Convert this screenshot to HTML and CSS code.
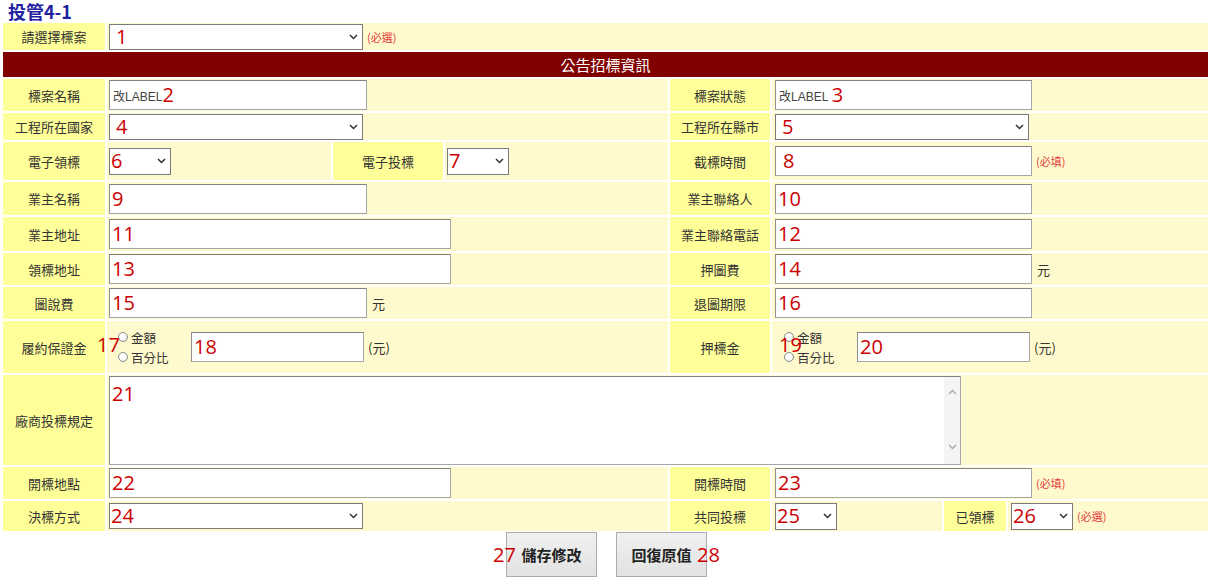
FILE: index.html
```html
<!DOCTYPE html>
<html lang="zh-Hant">
<head>
<meta charset="utf-8">
<title>投管4-1</title>
<link rel="stylesheet" href="styles.css">
</head>
<body>
<h1 class="title">投管4-1</h1>
<div class="form">
  <!-- row 1 -->
  <div class="lab">請選擇標案</div>
  <div class="val full">
    <div class="sel"><span class="num in6">1</span><svg class="chev" viewBox="0 0 9 6" width="9" height="6"><path d="M1 1l3.5 3.5L8 1" fill="none" stroke="#333" stroke-width="1.5"/></svg></div>
    <span class="req">(必選)</span>
  </div>

  <div class="head">公告招標資訊</div>

  <!-- row 3 -->
  <div class="lab">標案名稱</div>
  <div class="val left">
    <div class="inp"><span class="ph">改LABEL</span><span class="num">2</span></div>
  </div>
  <div class="lab">標案狀態</div>
  <div class="val r">
    <div class="inp r-w"><span class="ph">改LABEL&nbsp;</span><span class="num">3</span></div>
  </div>

  <!-- row 4 -->
  <div class="lab">工程所在國家</div>
  <div class="val left">
    <div class="sel"><span class="num in6">4</span><svg class="chev" viewBox="0 0 9 6" width="9" height="6"><path d="M1 1l3.5 3.5L8 1" fill="none" stroke="#333" stroke-width="1.5"/></svg></div>
  </div>
  <div class="lab">工程所在縣市</div>
  <div class="val r">
    <div class="sel"><span class="num in6">5</span><svg class="chev" viewBox="0 0 9 6" width="9" height="6"><path d="M1 1l3.5 3.5L8 1" fill="none" stroke="#333" stroke-width="1.5"/></svg></div>
  </div>

  <!-- row 5 -->
  <div class="lab">電子領標</div>
  <div class="val">
    <div class="sel mini"><span class="num">6</span><svg class="chev" viewBox="0 0 9 6" width="9" height="6"><path d="M1 1l3.5 3.5L8 1" fill="none" stroke="#333" stroke-width="1.5"/></svg></div>
  </div>
  <div class="lab">電子投標</div>
  <div class="val">
    <div class="sel mini"><span class="num">7</span><svg class="chev" viewBox="0 0 9 6" width="9" height="6"><path d="M1 1l3.5 3.5L8 1" fill="none" stroke="#333" stroke-width="1.5"/></svg></div>
  </div>
  <div class="lab">截標時間</div>
  <div class="val r">
    <div class="inp r-w"><span class="num in6">8</span></div>
    <span class="req">(必填)</span>
  </div>

  <!-- row 6 -->
  <div class="lab">業主名稱</div>
  <div class="val left">
    <div class="inp"><span class="num">9</span></div>
  </div>
  <div class="lab">業主聯絡人</div>
  <div class="val r">
    <div class="inp r-w"><span class="num">10</span></div>
  </div>

  <!-- row 7 -->
  <div class="lab">業主地址</div>
  <div class="val left">
    <div class="inp long"><span class="num">11</span></div>
  </div>
  <div class="lab">業主聯絡電話</div>
  <div class="val r">
    <div class="inp r-w"><span class="num">12</span></div>
  </div>

  <!-- row 8 -->
  <div class="lab">領標地址</div>
  <div class="val left">
    <div class="inp long"><span class="num">13</span></div>
  </div>
  <div class="lab">押圖費</div>
  <div class="val r">
    <div class="inp r-w"><span class="num">14</span></div>
    <span class="unit">元</span>
  </div>

  <!-- row 9 -->
  <div class="lab">圖說費</div>
  <div class="val left">
    <div class="inp"><span class="num">15</span></div>
    <span class="unit">元</span>
  </div>
  <div class="lab">退圖期限</div>
  <div class="val r">
    <div class="inp r-w"><span class="num">16</span></div>
  </div>

  <!-- row 10 -->
  <div class="lab">履約保證金</div>
  <div class="val left">
    <div class="radios">
      <span class="num ov ov17">17</span>
      <label class="radio"><span class="dot"></span>金額</label>
      <label class="radio"><span class="dot"></span>百分比</label>
    </div>
    <div class="inp short"><span class="num">18</span></div>
    <span class="unit paren">(元)</span>
  </div>
  <div class="lab">押標金</div>
  <div class="val r">
    <div class="radios">
      <label class="radio"><span class="dot"></span>金額</label>
      <label class="radio"><span class="dot"></span>百分比</label>
      <span class="num ov ov19">19</span>
    </div>
    <div class="inp short"><span class="num">20</span></div>
    <span class="unit paren">(元)</span>
  </div>

  <!-- row 11 -->
  <div class="lab">廠商投標規定</div>
  <div class="val full top">
    <div class="ta">
      <div class="ta-text"><span class="num">21</span></div>
      <div class="ta-bar">
        <svg viewBox="0 0 9 6" width="9" height="6"><path d="M1 5l3.5-3.5L8 5" fill="none" stroke="#a8a8a8" stroke-width="1.3"/></svg>
        <svg viewBox="0 0 9 6" width="9" height="6"><path d="M1 1l3.5 3.5L8 1" fill="none" stroke="#a8a8a8" stroke-width="1.3"/></svg>
      </div>
    </div>
  </div>

  <!-- row 12 -->
  <div class="lab">開標地點</div>
  <div class="val left">
    <div class="inp long"><span class="num">22</span></div>
  </div>
  <div class="lab">開標時間</div>
  <div class="val r">
    <div class="inp r-w"><span class="num">23</span></div>
    <span class="req">(必填)</span>
  </div>

  <!-- row 13 -->
  <div class="lab">決標方式</div>
  <div class="val left">
    <div class="sel"><span class="num">24</span><svg class="chev" viewBox="0 0 9 6" width="9" height="6"><path d="M1 1l3.5 3.5L8 1" fill="none" stroke="#333" stroke-width="1.5"/></svg></div>
  </div>
  <div class="lab">共同投標</div>
  <div class="split">
    <div class="val r">
      <div class="sel mini"><span class="num">25</span><svg class="chev" viewBox="0 0 9 6" width="9" height="6"><path d="M1 1l3.5 3.5L8 1" fill="none" stroke="#333" stroke-width="1.5"/></svg></div>
    </div>
    <div class="lab">已領標</div>
    <div class="val r">
      <div class="sel mini"><span class="num">26</span><svg class="chev" viewBox="0 0 9 6" width="9" height="6"><path d="M1 1l3.5 3.5L8 1" fill="none" stroke="#333" stroke-width="1.5"/></svg></div>
      <span class="req">(必選)</span>
    </div>
  </div>
</div>

<div class="actions">
  <button class="btn" type="button"><span class="num ov ov27">27</span>儲存修改</button>
  <button class="btn" type="button">回復原值<span class="num ov ov28">28</span></button>
</div>
</body>
</html>
```

FILE: styles.css
```css
* { box-sizing: border-box; }

body {
  margin: 0;
  background: #fff;
  font-family: "Noto Sans CJK TC", "Noto Sans", sans-serif;
  color: #333;
}

.title {
  margin: 0;
  padding-left: 8px;
  height: 23px;
  font-size: 18px;
  line-height: 23px;
  font-weight: bold;
  color: #1f1f9f;
}

.form {
  display: grid;
  width: 1205px;
  margin-left: 3px;
  grid-template-columns: 102px 224px 110px 223px 100px 436px;
  grid-template-rows: 27px 25px 32px 27px 38px 33px 34px 32px 32px 52px 90px 32px 30px;
  gap: 2px;
}

.lab {
  background: #ffff99;
  display: flex;
  align-items: center;
  justify-content: center;
  font-size: 13px;
  color: #333;
  white-space: nowrap;
}

.val {
  background: #fffacd;
  display: flex;
  align-items: center;
  padding-left: 2px;
  min-width: 0;
}

.val.r { padding-left: 3px; }
.val.left { grid-column: 2 / 5; }
.val.full { grid-column: 2 / -1; }
.val.top { align-items: flex-start; }

.head {
  grid-column: 1 / -1;
  background: #800000;
  color: #fff;
  font-size: 15px;
  display: flex;
  align-items: center;
  justify-content: center;
}

.split {
  display: grid;
  grid-template-columns: 170px 62px 200px;
  gap: 2px;
}

.num {
  font-family: "Open Sans", "Noto Sans", sans-serif;
  font-size: 20px;
  line-height: 1;
  color: #cc0000;
  white-space: nowrap;
}

.num.in6 { padding-left: 5px; }

.ph {
  font-family: "Liberation Sans", "Noto Sans CJK TC", sans-serif;
  font-size: 12px;
  color: #444;
  padding-left: 1px;
}

.inp {
  width: 258px;
  height: 30px;
  background: #fff;
  border: 1px solid #a6a6a6;
  border-top-color: #828282;
  border-left-color: #909090;
  display: flex;
  align-items: center;
  padding-left: 2px;
  flex-shrink: 0;
}

.inp.r-w { width: 257px; }
.inp.long { width: 342px; }
.inp.short { width: 173px; }

.sel {
  width: 254px;
  height: 26px;
  background: #fff;
  border: 1px solid #7a7a7a;
  display: flex;
  align-items: center;
  padding: 0 4px 0 1px;
  flex-shrink: 0;
}

.sel.mini { width: 62px; height: 27px; }

.chev { margin-left: auto; flex-shrink: 0; }

.req {
  font-size: 11px;
  color: #e23b3b;
  margin-left: 4px;
  white-space: nowrap;
}

.unit {
  font-size: 13px;
  color: #333;
  margin-left: 5px;
}

.unit.paren { margin-left: 4px; }

.radios {
  position: relative;
  width: 73px;
  margin-left: 9px;
  display: flex;
  flex-direction: column;
  flex-shrink: 0;
}

.radio {
  display: flex;
  align-items: center;
  height: 20px;
  font-size: 12.5px;
  color: #333;
}

.dot {
  width: 10px;
  height: 10px;
  border-radius: 50%;
  border: 1px solid #8c8c8c;
  background: radial-gradient(circle at 40% 40%, #fff 30%, #e4e4e4 100%);
  margin-right: 3px;
  flex-shrink: 0;
}

.ov { position: absolute; }
.ov17 { left: -21px; top: 8px; }
.ov19 { left: -5px; top: 8px; }

.ta {
  width: 852px;
  height: 89px;
  margin-top: 1px;
  background: #fff;
  border: 1px solid #a6a6a6;
  border-top-color: #828282;
  border-left-color: #909090;
  display: flex;
}

.ta-text {
  flex: 1;
  padding: 5px 2px;
}

.ta-bar {
  width: 16px;
  background: #f4f4f4;
  display: flex;
  flex-direction: column;
  justify-content: space-between;
  align-items: center;
  padding: 12px 0 14px;
}

.actions {
  display: flex;
  justify-content: center;
  gap: 19px;
  width: 1207px;
  margin-left: 3px;
  margin-top: 1px;
}

.btn {
  position: relative;
  width: 91px;
  height: 45px;
  padding: 0;
  border: 1px solid #acacac;
  background: linear-gradient(#f0f0f0, #e2e2e2);
  font-family: "Noto Sans CJK TC", "Noto Sans", sans-serif;
  font-size: 15px;
  font-weight: bold;
  color: #222;
}

.ov27 { left: -14px; top: 12px; font-weight: normal; }
.ov28 { left: 80px; top: 12px; font-weight: normal; }
```
